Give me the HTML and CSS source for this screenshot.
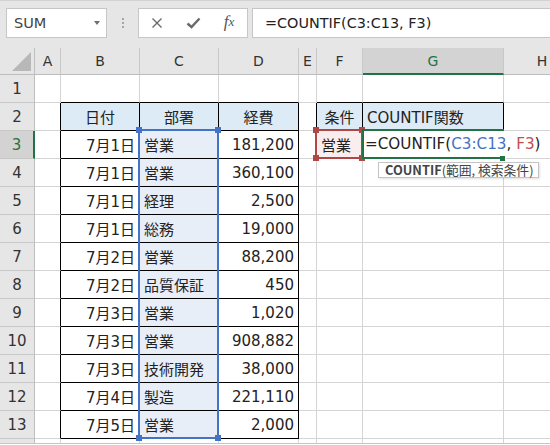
FILE: index.html
```html
<!DOCTYPE html>
<html lang="ja">
<head>
<meta charset="utf-8">
<title>COUNTIF</title>
<link rel="stylesheet" href="styles.css">
</head>
<body>
<div class="app">
  <div class="toolbar">
    <div class="namebox"><span>SUM</span><span class="caret"></span></div>
    <div class="grip"><i></i><i></i><i></i></div>
    <div class="fxbox">
      <span class="slot"><svg width="12" height="12" viewBox="0 0 12 12"><path d="M1.5 1.5 L10.5 10.5 M10.5 1.5 L1.5 10.5" stroke="#6a6a6a" stroke-width="1.4" fill="none"/></svg></span>
      <span class="slot"><svg width="15" height="12" viewBox="0 0 15 12"><path d="M1.5 6.5 L5.5 10 L13.5 1.5" stroke="#6a6a6a" stroke-width="2.4" fill="none"/></svg></span>
      <span class="slot fx">f<sub>x</sub></span>
    </div>
    <div class="formula">=COUNTIF(C3:C13, F3)</div>
  </div>

  <div class="sheet">
    <div class="row hdr">
      <div class="hc corner"><svg width="35" height="26" viewBox="0 0 35 26"><polygon points="12,23 31,23 31,4" fill="#b8b8b8"/></svg></div>
      <div class="hc">A</div>
      <div class="hc">B</div>
      <div class="hc">C</div>
      <div class="hc">D</div>
      <div class="hc">E</div>
      <div class="hc">F</div>
      <div class="hc on">G</div>
      <div class="hc">H</div>
    </div>

    <div class="row">
      <div class="rh">1</div>
      <div class="c"></div>
      <div class="c bt"></div><div class="c bt"></div><div class="c bt"></div>
      <div class="c"></div>
      <div class="c bt"></div><div class="c bt"></div>
      <div class="c"></div>
    </div>

    <div class="row">
      <div class="rh">2</div>
      <div class="c bl"></div>
      <div class="c t th">日付</div><div class="c t th">部署</div><div class="c t th">経費</div>
      <div class="c bl"></div>
      <div class="c t th">条件</div><div class="c t th l">COUNTIF関数</div>
      <div class="c"></div>
    </div>

    <div class="row">
      <div class="rh on">3</div>
      <div class="c bl"></div>
      <div class="c t r">7月1日</div><div class="c t sel">営業</div><div class="c t r">181,200</div>
      <div class="c"></div>
      <div class="c crit">営業</div><div class="c"></div>
      <div class="c"></div>
    </div>

    <div class="row">
      <div class="rh">4</div>
      <div class="c bl"></div>
      <div class="c t r">7月1日</div><div class="c t sel">営業</div><div class="c t r">360,100</div>
      <div class="c"></div><div class="c"></div><div class="c"></div><div class="c"></div>
    </div>

    <div class="row">
      <div class="rh">5</div>
      <div class="c bl"></div>
      <div class="c t r">7月1日</div><div class="c t sel">経理</div><div class="c t r">2,500</div>
      <div class="c"></div><div class="c"></div><div class="c"></div><div class="c"></div>
    </div>

    <div class="row">
      <div class="rh">6</div>
      <div class="c bl"></div>
      <div class="c t r">7月1日</div><div class="c t sel">総務</div><div class="c t r">19,000</div>
      <div class="c"></div><div class="c"></div><div class="c"></div><div class="c"></div>
    </div>

    <div class="row">
      <div class="rh">7</div>
      <div class="c bl"></div>
      <div class="c t r">7月2日</div><div class="c t sel">営業</div><div class="c t r">88,200</div>
      <div class="c"></div><div class="c"></div><div class="c"></div><div class="c"></div>
    </div>

    <div class="row">
      <div class="rh">8</div>
      <div class="c bl"></div>
      <div class="c t r">7月2日</div><div class="c t sel">品質保証</div><div class="c t r">450</div>
      <div class="c"></div><div class="c"></div><div class="c"></div><div class="c"></div>
    </div>

    <div class="row">
      <div class="rh">9</div>
      <div class="c bl"></div>
      <div class="c t r">7月3日</div><div class="c t sel">営業</div><div class="c t r">1,020</div>
      <div class="c"></div><div class="c"></div><div class="c"></div><div class="c"></div>
    </div>

    <div class="row">
      <div class="rh">10</div>
      <div class="c bl"></div>
      <div class="c t r">7月3日</div><div class="c t sel">営業</div><div class="c t r">908,882</div>
      <div class="c"></div><div class="c"></div><div class="c"></div><div class="c"></div>
    </div>

    <div class="row">
      <div class="rh">11</div>
      <div class="c bl"></div>
      <div class="c t r">7月3日</div><div class="c t sel">技術開発</div><div class="c t r">38,000</div>
      <div class="c"></div><div class="c"></div><div class="c"></div><div class="c"></div>
    </div>

    <div class="row">
      <div class="rh">12</div>
      <div class="c bl"></div>
      <div class="c t r">7月4日</div><div class="c t sel">製造</div><div class="c t r">221,110</div>
      <div class="c"></div><div class="c"></div><div class="c"></div><div class="c"></div>
    </div>

    <div class="row">
      <div class="rh">13</div>
      <div class="c bl"></div>
      <div class="c t r">7月5日</div><div class="c t sel">営業</div><div class="c t r">2,000</div>
      <div class="c"></div><div class="c"></div><div class="c"></div><div class="c"></div>
    </div>

    <div class="row">
      <div class="rh"></div>
      <div class="c"></div><div class="c"></div><div class="c"></div><div class="c"></div>
      <div class="c"></div><div class="c"></div><div class="c"></div><div class="c"></div>
    </div>

    <!-- overlays -->
    <div class="ref-blue"></div>
    <span class="hdl blue h1"></span>
    <span class="hdl blue h2"></span>
    <span class="hdl blue h3"></span>
    <span class="hdl blue h4"></span>

    <div class="ref-red"></div>
    <span class="hdl red r1"></span>
    <span class="hdl red r2"></span>
    <span class="hdl red r3"></span>
    <span class="hdl red r4"></span>

    <div class="active"></div>
    <div class="editor">=COUNTIF(<span class="cb">C3:C13</span>, <span class="cr">F3</span>)</div>
    <span class="fill-handle"></span>

    <div class="tip"><b>COUNTIF</b>(範囲, 検索条件)</div>
  </div>
</div>
</body>
</html>
```

FILE: styles.css
```css
html, body {
  margin: 0;
  padding: 0;
  background: #ffffff;
}

.app {
  width: 550px;
  height: 445px;
  overflow: hidden;
  font-family: "DejaVu Sans", "Noto Sans CJK JP", sans-serif;
  background: #ffffff;
}

/* ---------- formula bar ---------- */
.toolbar {
  height: 48px;
  box-sizing: border-box;
  border-top: 1px solid #d2d2d2;
  background: #e6e6e6;
  display: flex;
  align-items: flex-start;
  padding: 7px 0 0 6px;
  overflow: hidden;
}

.namebox {
  flex: 0 0 101px;
  height: 30px;
  box-sizing: border-box;
  border: 1px solid #c6c6c6;
  background: #fff;
  display: flex;
  align-items: center;
  justify-content: space-between;
  padding: 0 6px 0 7px;
  font-size: 14.5px;
  color: #444;
}

.caret {
  width: 0;
  height: 0;
  border-left: 3px solid transparent;
  border-right: 3px solid transparent;
  border-top: 4px solid #707070;
}

.grip {
  flex: 0 0 31px;
  height: 30px;
  display: flex;
  flex-direction: column;
  align-items: center;
  justify-content: center;
  gap: 2px;
}

.grip i {
  display: block;
  width: 2px;
  height: 2px;
  background: #a6a6a6;
}

.fxbox {
  flex: 0 0 109px;
  height: 30px;
  box-sizing: border-box;
  border: 1px solid #c6c6c6;
  background: #fff;
  display: flex;
  align-items: center;
}

.slot {
  width: 36px;
  height: 28px;
  display: flex;
  align-items: center;
  justify-content: center;
}

.fx {
  font-family: "Liberation Serif", serif;
  font-style: italic;
  font-size: 17px;
  color: #555;
  padding-bottom: 3px;
  box-sizing: border-box;
}

.fx sub {
  font-size: 13px;
  vertical-align: -2px;
}

.formula {
  flex: 0 0 330px;
  margin-left: 4px;
  height: 30px;
  box-sizing: border-box;
  border: 1px solid #c6c6c6;
  background: #fff;
  padding-left: 12px;
  font-size: 14.4px;
  line-height: 28px;
  color: #222;
  white-space: pre;
}

/* ---------- sheet ---------- */
.sheet {
  position: relative;
  height: 396px;
  box-sizing: border-box;
  border-bottom: 1px solid #c6c6c6;
  overflow: hidden;
}

.row {
  display: grid;
  grid-template-columns: 35px 26px 79px 79px 80px 18px 46px 141px 77px;
  height: 28px;
}

.row.hdr {
  height: 27px;
}

.hc {
  background: #e6e6e6;
  border-right: 1px solid #c8c8c8;
  border-bottom: 1px solid #bdbdbd;
  box-sizing: border-box;
  display: flex;
  align-items: center;
  justify-content: center;
  font-size: 14px;
  color: #333;
}

.hc.corner {
  display: block;
  border-right-color: #bdbdbd;
}

.hc.corner svg {
  display: block;
}

.hc.on {
  background: #d3d3d3;
  color: #217346;
  border-bottom: 2px solid #217346;
}

.rh {
  background: #e6e6e6;
  border-right: 1px solid #bdbdbd;
  border-bottom: 1px solid #c8c8c8;
  box-sizing: border-box;
  display: flex;
  align-items: center;
  justify-content: center;
  font-size: 15px;
  color: #333;
}

.rh.on {
  background: #d3d3d3;
  color: #217346;
  border-right: 2px solid #217346;
}

.c {
  border-right: 1px solid #d4d4d4;
  border-bottom: 1px solid #d4d4d4;
  box-sizing: border-box;
  display: flex;
  align-items: center;
  padding: 0 4px;
  font-size: 15px;
  color: #222;
  white-space: nowrap;
  overflow: hidden;
}

.c.t {
  border-right-color: #000;
  border-bottom-color: #000;
}

.c.bl {
  border-right-color: #000;
}

.c.bt {
  border-bottom-color: #000;
}

.c.th {
  background: #ddebf7;
  justify-content: center;
}

.c.th.l {
  justify-content: flex-start;
}

.c.r {
  justify-content: flex-end;
}

.c.sel {
  background: #e8eef8;
}

.c.crit {
  background: #f9eded;
}

/* ---------- overlays ---------- */
.ref-blue {
  position: absolute;
  left: 138px;
  top: 81px;
  width: 81px;
  height: 310px;
  box-sizing: border-box;
  border: 2px solid #4472c4;
}

.ref-red {
  position: absolute;
  left: 315px;
  top: 81px;
  width: 48px;
  height: 30px;
  box-sizing: border-box;
  border: 2px solid #b04747;
}

.hdl {
  position: absolute;
  width: 6px;
  height: 6px;
}

.hdl.blue { background: #4472c4; }
.hdl.red { background: #b04747; }

.h1 { left: 136px; top: 79px; }
.h2 { left: 215px; top: 79px; }
.h3 { left: 136px; top: 387px; }
.h4 { left: 215px; top: 387px; }

.r1 { left: 313px; top: 79px; }
.r2 { left: 359px; top: 79px; }
.r3 { left: 313px; top: 107px; }
.r4 { left: 359px; top: 107px; }

.active {
  position: absolute;
  left: 362px;
  top: 81px;
  width: 142px;
  height: 30px;
  box-sizing: border-box;
  border: 2px solid #217346;
  border-right: 0;
}

.editor {
  position: absolute;
  left: 364px;
  top: 83px;
  width: 184px;
  height: 26px;
  background: #fff;
  padding-left: 1px;
  box-sizing: border-box;
  font-size: 15.2px;
  line-height: 26px;
  color: #222;
  white-space: pre;
}

.cb { color: #4472c4; }
.cr { color: #c0504d; }

.fill-handle {
  position: absolute;
  left: 500px;
  top: 108px;
  width: 5px;
  height: 5px;
  background: #217346;
  border: 1px solid #fff;
  border-top: 0;
  border-left: 0;
}

.tip {
  position: absolute;
  left: 378px;
  top: 114px;
  width: 161px;
  height: 16px;
  box-sizing: border-box;
  border: 1px solid #c4c4c4;
  background: #fff;
  box-shadow: 1px 1px 2px rgba(0, 0, 0, 0.12);
  font-family: "Noto Sans CJK JP", sans-serif;
  font-size: 12.8px;
  line-height: 14px;
  color: #444;
  padding-left: 6px;
  white-space: nowrap;
}

.tip b {
  font-weight: 700;
}
```
